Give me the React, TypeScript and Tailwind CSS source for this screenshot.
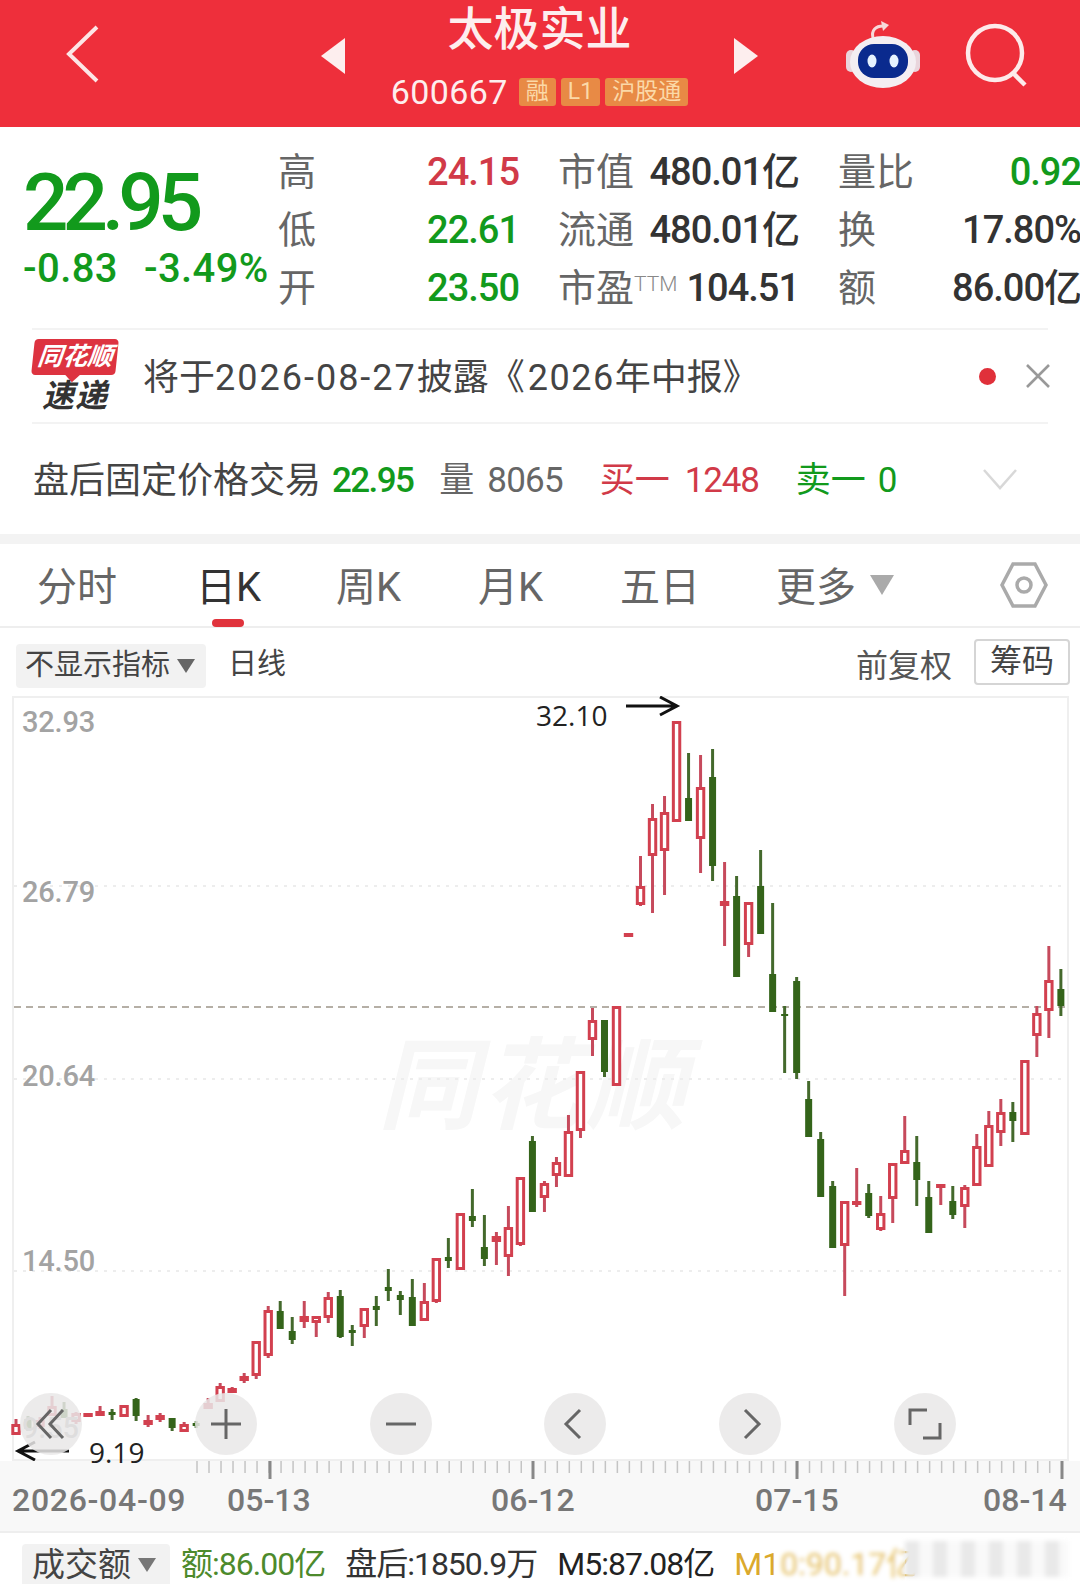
import React from 'react';

type Candle = [number, number, number, number, 'r' | 'g'];

// wick top, wick bottom, body top, body bottom (page y), one candle every 12px
const candles: Candle[] = [
  [1420, 1436, 1425, 1436, 'r'], [1417, 1432, 1420, 1430, 'g'], [1418, 1430, 1421, 1428, 'r'], [1397, 1417, 1407, 1417, 'r'],
  [1403, 1419, 1410, 1419, 'g'], [1413, 1425, 1414, 1423, 'r'], [1414, 1418, 1414, 1418, 'r'], [1407, 1417, 1412, 1417, 'r'],
  [1410, 1421, 1413, 1416, 'g'], [1406, 1418, 1406, 1418, 'r'], [1399, 1422, 1400, 1417, 'g'], [1416, 1428, 1421, 1426, 'r'],
  [1414, 1423, 1416, 1421, 'r'], [1419, 1432, 1419, 1429, 'g'], [1423, 1433, 1425, 1433, 'r'], [1422, 1429, 1424, 1427, 'g'],
  [1399, 1410, 1404, 1410, 'r'], [1384, 1403, 1387, 1403, 'r'], [1388, 1394, 1389, 1394, 'r'], [1374, 1384, 1377, 1382, 'r'],
  [1342, 1380, 1342, 1377, 'r'], [1307, 1359, 1311, 1357, 'r'], [1302, 1330, 1312, 1330, 'g'], [1318, 1345, 1332, 1341, 'g'],
  [1302, 1329, 1317, 1323, 'r'], [1317, 1338, 1317, 1324, 'r'], [1293, 1324, 1298, 1319, 'r'], [1291, 1339, 1297, 1338, 'g'],
  [1326, 1347, 1331, 1334, 'g'], [1309, 1339, 1309, 1328, 'r'], [1297, 1327, 1307, 1311, 'g'], [1270, 1302, 1288, 1292, 'g'],
  [1292, 1316, 1296, 1301, 'g'], [1280, 1327, 1298, 1327, 'g'], [1284, 1322, 1302, 1322, 'r'], [1259, 1304, 1259, 1303, 'r'],
  [1239, 1269, 1258, 1262, 'g'], [1214, 1271, 1214, 1271, 'r'], [1190, 1228, 1217, 1222, 'g'], [1216, 1267, 1248, 1260, 'g'],
  [1233, 1266, 1237, 1243, 'r'], [1207, 1277, 1228, 1258, 'r'], [1178, 1247, 1178, 1246, 'r'], [1137, 1213, 1142, 1213, 'g'],
  [1182, 1213, 1184, 1199, 'r'], [1158, 1188, 1163, 1177, 'r'], [1116, 1178, 1132, 1178, 'r'], [1072, 1139, 1072, 1132, 'r'],
  [1009, 1057, 1021, 1041, 'r'], [1021, 1078, 1021, 1073, 'g'], [1007, 1087, 1007, 1087, 'r'], [934, 938, 934, 938, 'r'],
  [857, 907, 887, 906, 'r'], [805, 914, 819, 857, 'r'], [797, 896, 813, 852, 'r'], [722, 823, 722, 823, 'r'],
  [754, 822, 799, 822, 'g'], [756, 874, 788, 840, 'r'], [750, 882, 778, 867, 'g'], [863, 947, 902, 907, 'r'],
  [877, 978, 897, 978, 'g'], [903, 958, 903, 946, 'r'], [851, 935, 887, 935, 'g'], [904, 1013, 975, 1013, 'g'],
  [1007, 1074, 1015, 1017, 'g'], [978, 1080, 982, 1074, 'g'], [1082, 1138, 1100, 1138, 'g'], [1133, 1198, 1140, 1198, 'g'],
  [1182, 1249, 1187, 1249, 'g'], [1202, 1297, 1202, 1247, 'r'], [1169, 1208, 1202, 1206, 'r'], [1185, 1219, 1194, 1217, 'g'],
  [1197, 1232, 1214, 1231, 'r'], [1164, 1224, 1164, 1200, 'r'], [1117, 1165, 1151, 1165, 'r'], [1137, 1207, 1163, 1181, 'g'],
  [1182, 1234, 1198, 1234, 'g'], [1185, 1206, 1185, 1188, 'r'], [1187, 1220, 1202, 1216, 'g'], [1186, 1229, 1188, 1208, 'r'],
  [1135, 1187, 1147, 1187, 'r'], [1112, 1168, 1126, 1168, 'r'], [1100, 1147, 1113, 1134, 'r'], [1103, 1143, 1113, 1122, 'g'],
  [1061, 1136, 1061, 1136, 'r'], [1007, 1058, 1014, 1037, 'r'], [947, 1039, 981, 1012, 'r'], [970, 1017, 990, 1007, 'g'],
];

const candleX = (i: number) => 16 + i * 12.01;

const Chart = () => (
  <svg viewBox="0 697 1080 765" className="absolute inset-0 w-[1080px] h-[765px]">
    {[887, 1080, 1272].map((y) => (
      <line key={y} x1="14" x2="1066" y1={y} y2={y} stroke="#ededed" strokeWidth="2" strokeDasharray="3 6" />
    ))}
    <line x1="14" x2="1066" y1="1008" y2="1008" stroke="#b5afa6" strokeWidth="2" strokeDasharray="7 5" />
    {candles.map(([wt, wb, bt, bb, kind], i) => {
      const x = candleX(i);
      if (kind === 'g') {
        return (
          <g key={i}>
            <line x1={x} x2={x} y1={wt} y2={wb} stroke="#44692c" strokeWidth="3" />
            <rect x={x - 3.5} y={bt} width="7" height={bb - bt} fill="#34641a" />
          </g>
        );
      }
      return (
        <g key={i}>
          <line x1={x} x2={x} y1={wt} y2={wb} stroke="#c64a5c" strokeWidth="3" />
          <rect x={x - 3.2} y={bt + 1.5} width="6.4" height={Math.max(bb - bt - 3, 1)} fill="#fff" stroke="#d2404f" strokeWidth="3" />
        </g>
      );
    })}
    {/* hand drawn arrows */}
    <path d="M626 707H677M660 698l17 9-17 9" fill="none" stroke="#111" strokeWidth="3" />
    <path d="M69 1452H18M35 1443l-17 9 17 9" fill="none" stroke="#111" strokeWidth="3" />
  </svg>
);

const RoundButton = ({ children }: { children: React.ReactNode }) => (
  <div className="w-[62px] h-[62px] rounded-full bg-[#e9e8e8]/85 flex items-center justify-center">
    <svg viewBox="0 0 40 40" className="w-[40px] h-[40px]" fill="none" stroke="#666" strokeWidth="3">
      {children}
    </svg>
  </div>
);

const Robot = () => (
  <svg viewBox="0 0 74 68" className="w-[74px] h-[68px]">
    <path d="M27 18c-2-8 3-12 10-12" fill="none" stroke="#f7d9d9" strokeWidth="3" />
    <path d="M35 1l8 4-6 6z" fill="#f7d9d9" />
    <rect x="0" y="30" width="10" height="22" rx="5" fill="#e9d5dc" />
    <rect x="64" y="30" width="10" height="22" rx="5" fill="#e9d5dc" />
    <ellipse cx="37" cy="42" rx="33" ry="26" fill="#f4eef2" />
    <rect x="12" y="24" width="50" height="34" rx="16" fill="#0a2a8e" />
    <ellipse cx="26" cy="41" rx="4.5" ry="6.5" fill="#e6f2ff" />
    <ellipse cx="48" cy="41" rx="4.5" ry="6.5" fill="#e6f2ff" />
  </svg>
);

const Stat = ({ label, value, color = 'text-[#333]' }: { label: React.ReactNode; value: string; color?: string }) => (
  <div className="flex items-center justify-between h-[58px] whitespace-nowrap">
    <span className="text-[38px] text-[#666]">{label}</span>
    <span className={`text-[38px] font-medium tracking-[-1px] ${color}`}>{value}</span>
  </div>
);

const red = 'text-[#d13a48]';
const green = 'text-[#129a1c]';

export default function App() {
  return (
    <div className="relative w-[1080px] h-[1584px] overflow-hidden bg-white font-['Roboto','Noto_Sans_CJK_SC',sans-serif]">
      {/* header */}
      <div className="h-[127px] bg-[#ee2f3b] flex text-[#fdeeee]">
        <div className="w-[300px] pl-[64px] pt-[24px]">
          <svg viewBox="0 0 36 60" className="w-[36px] h-[60px]" fill="none" stroke="#fde6e6" strokeWidth="4">
            <path d="M33 3L5 30l28 27" />
          </svg>
        </div>
        <div className="w-[480px] flex items-center justify-between pl-[21px] pr-[22px]">
          <div className="-mt-[16px] w-0 h-0 border-y-[18px] border-y-transparent border-r-[24px] border-r-[#fdeeee]" />
          <div className="flex flex-col items-center -mt-[6px]">
            <div className="text-[46px] leading-[60px] font-medium">太极实业</div>
            <div className="flex items-center gap-[5px] h-[60px] mt-[3px]">
              <span className="text-[34px] tracking-[0.4px] mr-[6px]">600667</span>
              {['融', 'L1', '沪股通'].map((tag) => (
                <span key={tag} className="h-[28px] px-[7px] rounded-[3px] bg-[#e88a45] text-[#fbd9a8] text-[23px] leading-[28px]">
                  {tag}
                </span>
              ))}
            </div>
          </div>
          <div className="-mt-[16px] w-0 h-0 border-y-[18px] border-y-transparent border-l-[24px] border-l-[#fdeeee]" />
        </div>
        <div className="flex-1 flex items-start pl-[66px] pt-[20px]">
          <Robot />
          <svg viewBox="0 0 64 64" className="w-[64px] h-[64px] ml-[45px] mt-[3px]" fill="none" stroke="#fdeaea" strokeWidth="4.5">
            <circle cx="30" cy="30" r="27" />
            <path d="M48 50l12 12" />
          </svg>
        </div>
      </div>

      {/* quote */}
      <div className="h-[201px] flex pl-[23px] pt-[16px]">
        <div className="w-[255px] shrink-0 pt-[22px]">
          <div className={`text-[80px] leading-[76px] font-medium tracking-[-6px] ${green}`}>22.95</div>
          <div className={`flex gap-[26px] text-[40px] leading-[50px] mt-[3px] font-medium tracking-[0.4px] whitespace-nowrap ${green}`}>
            <span>-0.83</span>
            <span>-3.49%</span>
          </div>
        </div>
        <div className="grid grid-cols-[241px_241px_243px] gap-x-[39px] pl-0 shrink-0">
          <div>
            <Stat label="高" value="24.15" color={red} />
            <Stat label="低" value="22.61" color={green} />
            <Stat label="开" value="23.50" color={green} />
          </div>
          <div>
            <Stat label="市值" value="480.01亿" />
            <Stat label="流通" value="480.01亿" />
            <Stat
              label={
                <>
                  市盈<span className="text-[21px] align-[10px] font-light text-[#888]">TTM</span>
                </>
              }
              value="104.51"
            />
          </div>
          <div>
            <Stat label="量比" value="0.92" color={green} />
            <Stat label="换" value="17.80%" />
            <Stat label="额" value="86.00亿" />
          </div>
        </div>
      </div>

      {/* announcement */}
      <div className="mx-[32px] h-[96px] border-y-2 border-[#f3f3f3] flex items-center">
        <div className="w-[88px] shrink-0 flex flex-col items-center -ml-[1px]">
          <div className="relative w-[84px] h-[36px] -skew-x-6 rounded-[4px] bg-[#dd3340] text-center text-white text-[25px] leading-[36px] font-bold italic">
            同花顺
            <div className="absolute left-[36px] -bottom-[5px] w-[11px] h-[11px] rotate-45 bg-[#dd3340]" />
          </div>
          <div className="text-[32px] leading-[34px] mt-[4px] font-bold italic text-[#333] tracking-[1px]">速递</div>
        </div>
        <div className="ml-[24px] mt-[3px] text-[36px] text-[#444] whitespace-nowrap">
          将于<span className="tracking-[2px]">2026-08-27</span>披露《<span className="ml-[3px] tracking-[1.5px]">2026</span>年中报》
        </div>
        <div className="ml-auto w-[17px] h-[17px] rounded-full bg-[#e0303a]" />
        <svg viewBox="0 0 24 24" className="w-[24px] h-[24px] ml-[30px] mr-[-2px]" fill="none" stroke="#999" strokeWidth="2.6">
          <path d="M1 1l22 22M23 1L1 23" />
        </svg>
      </div>

      {/* after hours */}
      <div className="h-[110px] px-[33px] pt-[4px] flex items-center text-[35px] whitespace-nowrap">
        <span className="text-[#444] text-[36px]">盘后固定价格交易</span>
        <span className={`ml-[11px] font-medium tracking-[-1.6px] ${green}`}>22.95</span>
        <span className="ml-[26px] text-[#666]">量</span>
        <span className="ml-[13px] text-[#666] tracking-[-0.8px]">8065</span>
        <span className={`ml-[37px] ${red}`}>买一</span>
        <span className={`ml-[15px] tracking-[-1.2px] ${red}`}>1248</span>
        <span className={`ml-[37px] ${green}`}>卖一</span>
        <span className={`ml-[12px] ${green}`}>0</span>
        <svg viewBox="0 0 36 22" className="w-[36px] h-[22px] ml-auto mr-[29px] -mt-[4px]" fill="none" stroke="#d8d8d8" strokeWidth="2.5">
          <path d="M2 2l16 18L34 2" />
        </svg>
      </div>

      <div className="h-[10px] bg-[#f3f3f3]" />

      {/* period tabs */}
      <div className="relative h-[84px] border-b-2 border-[#eeeeee] flex items-center pl-[37px] text-[40px] text-[#666] whitespace-nowrap">
        <span className="w-[159px] mt-[5px]">分时</span>
        <span className="w-[140px] mt-[5px] text-[#333]">日K</span>
        <span className="w-[142px] mt-[5px]">周K</span>
        <span className="w-[142px] mt-[5px]">月K</span>
        <span className="w-[156px] mt-[5px]">五日</span>
        <span className="mt-[5px]">更多</span>
        <div className="ml-[14px] w-0 h-0 border-x-[12px] border-x-transparent border-t-[20px] border-t-[#aaa]" />
        <svg viewBox="0 0 48 46" className="w-[48px] h-[46px] ml-auto mr-[32px]" fill="none" stroke="#aaa" strokeWidth="3.5">
          <path d="M13 2h22l11 21-11 21H13L2 23z" />
          <circle cx="24" cy="23" r="7" />
        </svg>
        <div className="absolute left-[212px] -bottom-[1px] w-[32px] h-[8px] rounded-full bg-[#e0333c]" />
      </div>

      {/* chart toolbar */}
      <div className="h-[68px] flex items-center pl-[16px] pr-[10px] pt-[8px] whitespace-nowrap">
        <div className="h-[44px] w-[190px] flex items-center pl-[9px] rounded-[4px] bg-[#f2f2f2] text-[29px] text-[#444]">
          不显示指标
          <div className="ml-[7px] w-0 h-0 border-x-[9px] border-x-transparent border-t-[14px] border-t-[#666]" />
        </div>
        <span className="ml-[22px] -mt-[3px] text-[29px] text-[#444]">日线</span>
        <span className="ml-auto text-[32px] text-[#555]">前复权</span>
        <span className="ml-[22px] -mt-[8px] w-[96px] h-[46px] border-2 border-[#d5d5d5] rounded-[4px] text-center text-[32px] leading-[40px] text-[#444]">筹码</span>
      </div>

      {/* k line chart */}
      <div className="relative h-[765px] before:absolute before:left-[12px] before:right-[11px] before:top-0 before:bottom-0 before:border-2 before:border-[#efefef]">
        <div className="absolute left-[378px] top-[336px] text-[100px] leading-[110px] font-bold italic text-[#f7f7f7] tracking-[4px]">同花顺</div>
        <Chart />
        {[
          { top: 'top-[8px]', text: '32.93' },
          { top: 'top-[178px]', text: '26.79' },
          { top: 'top-[362px]', text: '20.64' },
          { top: 'top-[547px]', text: '14.50' },
          { top: 'top-[714px]', text: '9.55' },
        ].map((l) => (
          <span key={l.text} className={`absolute left-[22px] ${l.top} text-[29px] leading-[36px] font-medium tracking-[-0.2px] text-[#a3a3a3]`}>
            {l.text}
          </span>
        ))}
        <span className="absolute left-[536px] top-[1px] text-[28px] leading-[36px] text-[#222] font-['Open_Sans',sans-serif]">32.10</span>
        <span className="absolute left-[89px] top-[738px] text-[28px] leading-[36px] text-[#222] font-['Open_Sans',sans-serif]">9.19</span>
        <div className="absolute left-[20px] w-[936px] top-[697px] flex justify-between">
          <RoundButton>
            <path d="M20 6L7 20l13 14M32 6L19 20l13 14" />
          </RoundButton>
          <RoundButton>
            <path d="M20 5v30M5 20h30" />
          </RoundButton>
          <RoundButton>
            <path d="M5 20h30" />
          </RoundButton>
          <RoundButton>
            <path d="M25 6L11 20l14 14" />
          </RoundButton>
          <RoundButton>
            <path d="M15 6l14 14-14 14" />
          </RoundButton>
          <RoundButton>
            <path d="M22 6H5v15M18 34h17V19" />
          </RoundButton>
        </div>
      </div>

      {/* date axis */}
      <div className="h-[72px] bg-[#f8f8f8] border-b-2 border-[#eeeeee]">
        <svg viewBox="0 0 1080 20" className="w-[1080px] h-[20px] block">
          {Array.from({ length: 73 }).map((_, i) => {
            const x = 197 + i * 12.01;
            return <line key={i} x1={x} x2={x} y1="0" y2="12" stroke="#c4c4c4" strokeWidth="1.5" />;
          })}
          {[270, 533, 797, 1062].map((x) => (
            <line key={x} x1={x} x2={x} y1="0" y2="18" stroke="#888" strokeWidth="3" />
          ))}
        </svg>
        <div className="h-[38px] pl-[12px] flex items-center text-[32px] text-[#777] font-medium whitespace-nowrap">
          <span className="w-[215px] tracking-[0.7px]">2026-04-09</span>
          <span className="w-[264px]">05-13</span>
          <span className="w-[264px]">06-12</span>
          <span className="w-[228px]">07-15</span>
          <span>08-14</span>
        </div>
      </div>

      {/* volume legend */}
      <div className="relative h-[52px] pl-[22px] flex items-start pt-[11px] text-[32px] whitespace-nowrap">
        <div className="h-[42px] w-[148px] flex items-center pl-[10px] bg-[#f2f2f2] text-[33px] text-[#444] rounded-t-[4px]">
          成交额
          <div className="ml-[7px] w-0 h-0 border-x-[9px] border-x-transparent border-t-[14px] border-t-[#777]" />
        </div>
        <span className="ml-[11px] leading-[40px] tracking-[-1px] text-[#4d8a2c]">额:86.00亿</span>
        <span className="ml-[20px] leading-[40px] tracking-[-1px] text-[#333]">盘后:1850.9万</span>
        <span className="ml-[20px] leading-[40px] tracking-[-1px] text-[#222]">M5:87.08亿</span>
        <span className="ml-[20px] leading-[40px] text-[#dba92c]">M10:90.17亿</span>
        <div className="absolute left-[775px] top-0 bottom-0 w-[130px] bg-white/30 backdrop-blur-[2px]" />
        <div className="absolute left-[905px] right-[12px] top-[8px] h-[36px] blur-[2px] bg-[repeating-linear-gradient(90deg,#e9e9e9_0_14px,#f9f9f9_14px_28px)]" />
      </div>
    </div>
  );
}
